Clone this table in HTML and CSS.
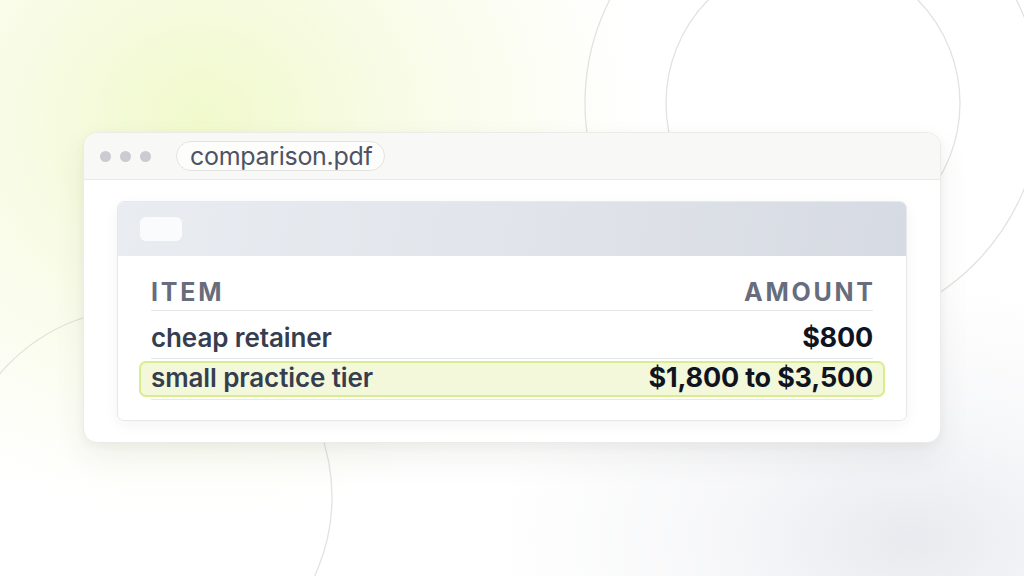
FILE: index.html
```html
<!DOCTYPE html>
<html lang="en">
<head>
<meta charset="utf-8">
<title>comparison.pdf</title>
<link rel="stylesheet" href="styles.css">
</head>
<body>
<svg class="rings" width="1024" height="576" viewBox="0 0 1024 576" aria-hidden="true">
  <circle cx="813" cy="103" r="147" />
  <circle cx="813" cy="103" r="228" />
  <circle cx="143" cy="497" r="189" />
</svg>
<main class="stage">
  <section class="window">
    <header class="titlebar">
      <div class="dots"><span class="dot"></span><span class="dot"></span><span class="dot"></span></div>
      <div class="filename">comparison.pdf</div>
    </header>
    <div class="window-body">
      <div class="card">
        <div class="card-head"><span class="chip"></span></div>
        <div class="table">
          <div class="row row-head">
            <span class="cell">ITEM</span>
            <span class="cell">AMOUNT</span>
          </div>
          <div class="row row-first">
            <span class="cell item">cheap retainer</span>
            <span class="cell amount">$800</span>
          </div>
          <div class="row row-hl">
            <span class="cell item">small practice tier</span>
            <span class="cell amount">$1,800 to $3,500</span>
          </div>
        </div>
      </div>
    </div>
  </section>
</main>
</body>
</html>
```

FILE: styles.css
```css
* { box-sizing: border-box; }

html, body {
  margin: 0;
  width: 1024px;
  height: 576px;
  overflow: hidden;
}

body {
  position: relative;
  font-family: Inter, "Noto Sans", "Liberation Sans", sans-serif;
  background:
    radial-gradient(ellipse 440px 400px at 200px 120px, rgba(241, 249, 204, 1) 0%, rgba(244, 250, 216, 0.7) 40%, rgba(250, 252, 240, 0) 100%),
    radial-gradient(ellipse 420px 260px at 910px 540px, rgba(232, 234, 239, 1) 0%, rgba(240, 241, 244, 0.55) 45%, rgba(255, 255, 255, 0) 100%),
    #ffffff;
}

.rings {
  position: absolute;
  left: 0;
  top: 0;
  fill: none;
  stroke: #e2e2de;
  stroke-width: 1.3;
}

.stage {
  position: relative;
  width: 1024px;
  height: 576px;
  display: flex;
  align-items: flex-start;
  justify-content: center;
  padding-top: 132px;
}

.window {
  width: 858px;
  background: #ffffff;
  border: 1px solid #ebebe7;
  border-radius: 14px;
  box-shadow: 0 14px 32px rgba(50, 50, 45, 0.07), 0 3px 10px rgba(50, 50, 45, 0.04);
  overflow: hidden;
}

.titlebar {
  height: 47px;
  background: #f8f8f6;
  border-bottom: 1px solid #eaeae5;
  display: flex;
  align-items: center;
  padding-left: 16px;
  gap: 25px;
}

.dots {
  display: flex;
  gap: 9px;
}

.dot {
  width: 11px;
  height: 11px;
  border-radius: 50%;
  background: #cbccd2;
}

.filename {
  height: 30px;
  padding: 0 12px 0 13px;
  border: 1px solid #e2e2de;
  border-radius: 15px;
  background: #fdfdfc;
  display: flex;
  align-items: center;
  font-size: 25px;
  color: #4d5365;
  letter-spacing: -0.3px;
}

.window-body {
  padding: 21px 33px 21px;
}

.card {
  background: #ffffff;
  border: 1px solid #e8e8e6;
  border-radius: 7px;
  box-shadow: 0 4px 14px rgba(40, 40, 40, 0.05);
  overflow: hidden;
}

.card-head {
  height: 54px;
  background: linear-gradient(100deg, #e9ecf1 0%, #e1e4ea 50%, #d6dae2 100%);
  display: flex;
  align-items: center;
  padding-left: 22px;
}

.chip {
  width: 42px;
  height: 24px;
  border-radius: 6px;
  background: #fafbfc;
}

.table {
  padding: 0 33px 20px;
}

.row {
  position: relative;
  display: flex;
  justify-content: space-between;
  align-items: center;
  line-height: 30px;
  border-bottom: 1px solid #e6e7ea;
}

.row-head {
  padding: 21px 0 3px;
  font-size: 25px;
  font-weight: 700;
  letter-spacing: 0.11em;
  color: #676d7c;
}

.row-head .cell:last-child {
  margin-right: -0.11em;
}

.row-first {
  padding: 12px 0 5px;
}

.row-hl {
  padding: 4px 0 6px;
}

.row-hl::before {
  content: "";
  position: absolute;
  top: 2px;
  bottom: 2px;
  left: -12px;
  right: -12px;
  background: #f3f8da;
  border: 2px solid #d8ee8e;
  border-radius: 7px;
}

.cell {
  position: relative;
}

.item {
  font-size: 26px;
  font-weight: 600;
  color: #363d4f;
  letter-spacing: -0.1px;
}

.amount {
  font-size: 27px;
  font-weight: 700;
  color: #10141f;
  letter-spacing: -0.2px;
}
```
